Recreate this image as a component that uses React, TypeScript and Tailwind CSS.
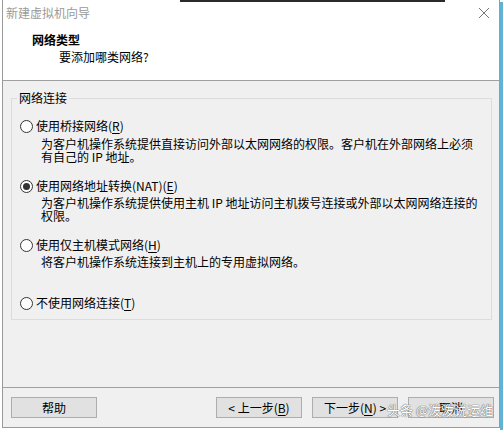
import React from "react";

const font = { fontFamily: '"Noto Sans CJK SC", "Microsoft YaHei", sans-serif' };

function Radio({ checked }: { checked?: boolean }) {
  return (
    <span className="w-[13px] h-[13px] rounded-full border border-[#333] bg-white flex items-center justify-center shrink-0">
      {checked && <span className="w-[7px] h-[7px] rounded-full bg-[#333]" />}
    </span>
  );
}

function U({ c }: { c: string }) {
  return <span className="underline underline-offset-2">{c}</span>;
}

function Btn({ children, w = "w-[86px]" }: { children: React.ReactNode; w?: string }) {
  return (
    <div className={`${w} h-[21px] border border-[#adadad] bg-[#e1e1e1] flex items-center justify-center text-[12px] text-black`}>
      {children}
    </div>
  );
}

export default function App() {
  return (
    <div className="w-[503px] h-[430px] bg-white relative overflow-hidden" style={font}>
      <div className="absolute top-0 left-[180px] w-[265px] h-[2px] bg-[#2a2a2a]" />
      <div className="absolute top-[2px] right-0 w-[3px] h-[428px] bg-[#5fb3d6]" />
      <div className="ml-[2px] mr-[3px] h-[428px] border-l border-r border-b border-[#9a9a9a] flex flex-col">
        {/* title bar */}
        <div className="h-[26px] bg-white flex items-center justify-between pl-[3px] pr-[8px]">
          <span className="text-[12px] text-[#9a9a9a] leading-none">新建虚拟机向导</span>
          <svg width="12" height="12" viewBox="0 0 12 12" className="mr-[1px]">
            <path d="M1 1 L11 11 M11 1 L1 11" stroke="#777" strokeWidth="1" />
          </svg>
        </div>
        {/* header */}
        <div className="h-[55px] bg-white border-b border-[#a0a0a0] pl-[29px] pt-[6px]">
          <div className="text-[12px] font-bold text-black leading-[16px]">网络类型</div>
          <div className="text-[12px] text-black leading-[16px] pl-[27px] mt-[1px]">要添加哪类网络?</div>
        </div>
        {/* body */}
        <div className="flex-1 bg-[#f0f0f0] flex flex-col">
          <div className="flex-1 px-[8px] pt-[10px]">
            <div className="relative border border-[#dcdcdc] h-[222px] w-[481px] mt-[7px]">
              <span className="absolute -top-[9px] left-[5px] bg-[#f0f0f0] px-[2px] text-[12px] leading-[16px] text-black">网络连接</span>
              <div className="pt-[18px] pl-[8px] flex flex-col text-[12px] text-black">
                <div className="flex items-center gap-[3px] h-[18px]">
                  <Radio />
                  <span>使用桥接网络(<U c="R" />)</span>
                </div>
                <div className="pl-[21px] leading-[13px] mt-[2px] w-[465px]">
                  为客户机操作系统提供直接访问外部以太网网络的权限。客户机在外部网络上必须<br />有自己的 IP 地址。
                </div>
                <div className="flex items-center gap-[3px] h-[18px] mt-[14px]">
                  <Radio checked />
                  <span>使用网络地址转换(NAT)(<U c="E" />)</span>
                </div>
                <div className="pl-[21px] leading-[13px] mt-[1px]">
                  为客户机操作系统提供使用主机 IP 地址访问主机拨号连接或外部以太网网络连接的<br />权限。
                </div>
                <div className="flex items-center gap-[3px] h-[18px] mt-[14px]">
                  <Radio />
                  <span>使用仅主机模式网络(<U c="H" />)</span>
                </div>
                <div className="pl-[21px] leading-[13px] mt-[1px]">将客户机操作系统连接到主机上的专用虚拟网络。</div>
                <div className="flex items-center gap-[3px] h-[18px] mt-[26px]">
                  <Radio />
                  <span>不使用网络连接(<U c="T" />)</span>
                </div>
              </div>
            </div>
          </div>
          <div className="border-t border-[#a0a0a0] h-[40px] flex items-center pl-[8px] pr-[5px]">
            <Btn>帮助</Btn>
            <div className="flex-1" />
            <Btn>&lt; 上一步(<U c="B" />)</Btn>
            <div className="w-[10px]" />
            <Btn>下一步(<U c="N" />) &gt;</Btn>
            <div className="w-[10px]" />
            <Btn>取消</Btn>
          </div>
        </div>
      </div>
      <span
        className="absolute left-[387px] top-[402px] text-[13px] leading-[16px] text-white"
        style={{ textShadow: "0 0 1px #555, 0 0 1px #555" }}
      >
        头条 @泼泼说运维
      </span>
    </div>
  );
}
